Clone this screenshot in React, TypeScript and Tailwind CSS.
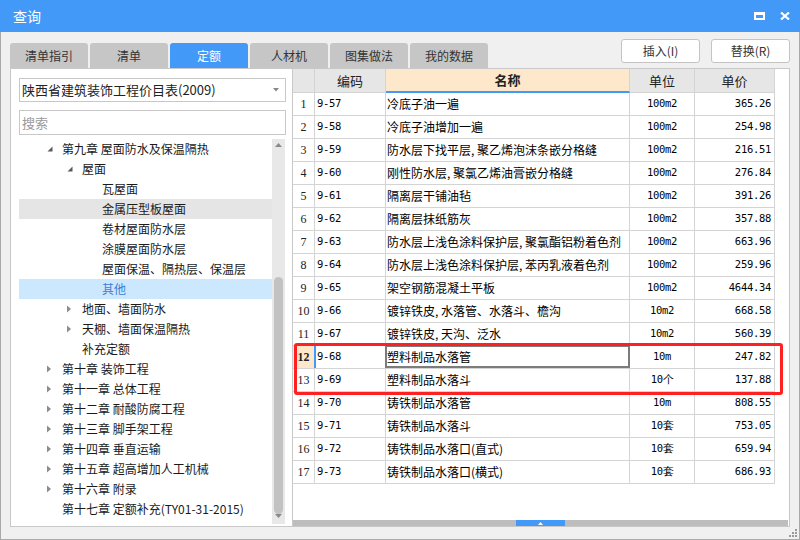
import React from "react";

type TreeItem = { l: 1 | 2 | 3; a?: "open" | "closed"; t: string; hl?: boolean; sel?: boolean };

const tree: TreeItem[] = [
  { l: 1, a: "open", t: "第九章 屋面防水及保温隔热" },
  { l: 2, a: "open", t: "屋面" },
  { l: 3, t: "瓦屋面" },
  { l: 3, t: "金属压型板屋面", hl: true },
  { l: 3, t: "卷材屋面防水层" },
  { l: 3, t: "涂膜屋面防水层" },
  { l: 3, t: "屋面保温、隔热层、保温层" },
  { l: 3, t: "其他", sel: true },
  { l: 2, a: "closed", t: "地面、墙面防水" },
  { l: 2, a: "closed", t: "天棚、墙面保温隔热" },
  { l: 2, t: "补充定额" },
  { l: 1, a: "closed", t: "第十章 装饰工程" },
  { l: 1, a: "closed", t: "第十一章 总体工程" },
  { l: 1, a: "closed", t: "第十二章 耐酸防腐工程" },
  { l: 1, a: "closed", t: "第十三章 脚手架工程" },
  { l: 1, a: "closed", t: "第十四章 垂直运输" },
  { l: 1, a: "closed", t: "第十五章 超高增加人工机械" },
  { l: 1, a: "closed", t: "第十六章 附录" },
  { l: 1, t: "第十七章 定额补充(TY01-31-2015)" },
];

const rows: [string, string, string, string][] = [
  ["9-57", "冷底子油一遍", "100m2", "365.26"],
  ["9-58", "冷底子油增加一遍", "100m2", "254.98"],
  ["9-59", "防水层下找平层, 聚乙烯泡沫条嵌分格缝", "100m2", "216.51"],
  ["9-60", "刚性防水层, 聚氯乙烯油膏嵌分格缝", "100m2", "276.84"],
  ["9-61", "隔离层干铺油毡", "100m2", "391.26"],
  ["9-62", "隔离层抹纸筋灰", "100m2", "357.88"],
  ["9-63", "防水层上浅色涂料保护层, 聚氯酯铝粉着色剂", "100m2", "663.96"],
  ["9-64", "防水层上浅色涂料保护层, 苯丙乳液着色剂", "100m2", "259.96"],
  ["9-65", "架空钢筋混凝土平板", "100m2", "4644.34"],
  ["9-66", "镀锌铁皮, 水落管、水落斗、檐沟", "10m2", "668.58"],
  ["9-67", "镀锌铁皮, 天沟、泛水", "10m2", "560.39"],
  ["9-68", "塑料制品水落管", "10m", "247.82"],
  ["9-69", "塑料制品水落斗", "10个", "137.88"],
  ["9-70", "铸铁制品水落管", "10m", "808.55"],
  ["9-71", "铸铁制品水落斗", "10套", "753.05"],
  ["9-72", "铸铁制品水落口(直式)", "10套", "659.94"],
  ["9-73", "铸铁制品水落口(横式)", "10套", "686.93"],
];

const tabs = ["清单指引", "清单", "定额", "人材机", "图集做法", "我的数据"];

function OpenArrow() {
  return (
    <svg width="6" height="6" viewBox="0 0 6 6" className="ml-[1px]">
      <path d="M5.5 0.5 L5.5 5.5 L0.5 5.5 Z" fill="#5a5a5a" />
    </svg>
  );
}
function ClosedArrow() {
  return (
    <svg width="5" height="8" viewBox="0 0 5 8" className="ml-[1px]">
      <path d="M0 0.5 L4 4 L0 7.5 Z" fill="#8c8c8c" />
    </svg>
  );
}

const padByLevel: Record<number, string> = {
  1: "w-[27px]",
  2: "w-[47px]",
  3: "w-[67px]",
};

const mono = "font-['DejaVu_Sans_Mono',monospace] text-[10.5px] tracking-[-0.3px] text-black";
const cell = "border-r border-b border-[#d4d4d4] h-[23px] flex items-center";

export default function App() {
  return (
    <div className="w-[800px] h-[540px] flex flex-col bg-[#f0f0f0] font-['Microsoft_YaHei','Noto_Sans_CJK_SC',sans-serif] overflow-hidden">
      {/* Title bar */}
      <div className="h-[32px] bg-[#4299f7] flex items-center justify-between pl-[13px] pr-[10px] shrink-0">
        <span className="text-white text-[14px] leading-none">查询</span>
        <div className="flex items-center gap-[15px]">
          <svg width="11" height="8" viewBox="0 0 11 8">
            <path d="M0 0h11v8H0z M2 3h7v3H2z" fill="#fff" fillRule="evenodd" />
          </svg>
          <svg width="10" height="8" viewBox="0 0 10 8">
            <path d="M1 0.5 L9 7.5 M9 0.5 L1 7.5" stroke="#fff" strokeWidth="2.2" />
          </svg>
        </div>
      </div>

      {/* Body */}
      <div className="flex-1 flex flex-col border-x border-b border-[#a9a9a9] pl-[9px] pr-[9px] relative">
        {/* Tabs & buttons */}
        <div className="h-[36px] flex justify-between shrink-0">
          <div className="flex gap-[2px] items-end">
            {tabs.map((t) => (
              <div
                key={t}
                className={
                  "w-[78px] h-[25px] rounded-t-[3px] flex items-center justify-center text-[12px] " +
                  (t === "定额" ? "bg-[#4299f7] text-white" : "bg-[#c6c6c6] text-[#333]")
                }
              >
                {t}
              </div>
            ))}
          </div>
          <div className="flex gap-[11px] pt-[7px]">
            <button className="w-[79px] h-[24px] bg-white border border-[#c4c4c4] rounded-[3px] text-[12px] text-[#333]">
              插入(I)
            </button>
            <button className="w-[79px] h-[24px] bg-white border border-[#c4c4c4] rounded-[3px] text-[12px] text-[#333]">
              替换(R)
            </button>
          </div>
        </div>

        {/* Panels */}
        <div className="h-[459px] flex shrink-0">
          {/* Left panel */}
          <div className="w-[282px] bg-white border-l border-t border-b border-[#c8c8c8] flex flex-col pl-[8px] pr-[6px] pt-[9px] pb-[1px]">
            <div className="h-[24px] border border-[#c8c8c8] flex items-center justify-between pl-[2px] pr-[6px]">
              <span className="text-[13px] text-[#222] whitespace-nowrap">陕西省建筑装饰工程价目表(2009)</span>
              <svg width="6" height="4" viewBox="0 0 6 4">
                <path d="M0 0 L6 0 L3 3.5 Z" fill="#888" />
              </svg>
            </div>
            <div className="h-[25px] mt-[8px] border border-[#c8c8c8] flex items-center pl-[2px]">
              <span className="text-[13px] text-[#9a9a9a]">搜索</span>
            </div>
            <div className="flex-1 flex mt-[4px]">
              <div className="w-[253px] flex flex-col">
                {tree.map((it, i) => (
                  <div
                    key={i}
                    className={
                      "h-[20px] flex items-center shrink-0 " +
                      (it.sel ? "bg-[#cce8ff]" : it.hl ? "bg-[#e5e5e5]" : "")
                    }
                  >
                    <div className={padByLevel[it.l] + " shrink-0"} />
                    <div className="w-[16px] shrink-0 flex items-center">
                      {it.a === "open" ? <OpenArrow /> : it.a === "closed" ? <ClosedArrow /> : null}
                    </div>
                    <span
                      className={
                        "text-[12px] whitespace-nowrap leading-none " +
                        (it.sel ? "text-[#3a7fd9]" : "text-[#1a1a1a]")
                      }
                    >
                      {it.t}
                    </span>
                  </div>
                ))}
              </div>
              <div className="w-[13px] bg-[#e8e8e8] flex flex-col items-center mb-[1px]">
                <div className="h-[12px] flex items-center justify-center">
                  <svg width="7" height="4" viewBox="0 0 7 4">
                    <path d="M0 4 L3.5 0 L7 4 Z" fill="#8a8a8a" />
                  </svg>
                </div>
                <div className="w-[9px] h-[237px] mt-[126px] rounded-full bg-[#c2c2c2]" />
                <div className="flex-1" />
                <div className="h-[10px] flex items-start justify-center">
                  <svg width="7" height="4" viewBox="0 0 7 4">
                    <path d="M0 0 L7 0 L3.5 4 Z" fill="#8a8a8a" />
                  </svg>
                </div>
              </div>
            </div>
          </div>

          {/* Right panel */}
          <div className="flex-1 bg-white border border-[#c8c8c8] flex flex-col">
            <div className="relative w-[482px]">
              <div className="grid grid-cols-[22px_71px_244px_65px_80px]">
                <div className="border-r border-b border-[#d4d4d4] h-[24px] bg-[#e6e6e6]" />
                <div className="border-r border-b border-[#d4d4d4] h-[24px] bg-[#e6e6e6] flex items-center justify-center text-[13px] text-[#222]">
                  编码
                </div>
                <div className="border-r border-b-2 border-r-[#d4d4d4] border-b-[#4299f7] h-[24px] bg-[#fde8cc] flex items-center justify-center text-[13px] font-bold text-[#222]">
                  名称
                </div>
                <div className="border-r border-b border-[#d4d4d4] h-[24px] bg-[#e6e6e6] flex items-center justify-center text-[13px] text-[#222]">
                  单位
                </div>
                <div className="border-r border-b border-[#d4d4d4] h-[24px] bg-[#e6e6e6] flex items-center justify-center text-[13px] text-[#222]">
                  单价
                </div>
                {rows.map((r, i) => {
                  const n = i + 1;
                  const cur = n === 12;
                  return (
                    <React.Fragment key={n}>
                      <div
                        className={
                          cell +
                          " justify-center font-['Liberation_Serif',serif] text-[12px] text-[#222] " +
                          (cur ? "bg-[#fde8cc] font-bold" : "")
                        }
                      >
                        {n}
                      </div>
                      <div className={cell + " pl-[2px] relative " + mono}>
                        {cur && <div className="absolute -left-[1px] top-0 bottom-0 w-[2px] bg-[#4299f7]" />}
                        {r[0]}
                      </div>
                      <div className={cell + " pl-[1px] text-[12px] text-black whitespace-nowrap relative"}>
                        {cur && (
                          <div className="absolute -left-[1px] -top-[1px] -right-[1px] bottom-0 border-2 border-[#7c7c7c]" />
                        )}
                        {r[1]}
                      </div>
                      <div className={cell + " justify-center " + mono}>{r[2]}</div>
                      <div className={cell + " justify-end pr-[3px] " + mono}>{r[3]}</div>
                    </React.Fragment>
                  );
                })}
              </div>
              {/* red highlight */}
              <div className="absolute left-[1px] top-[274px] w-[489px] h-[52px] border-[3px] border-[#ff2121] rounded-[3px] pointer-events-none" />
            </div>
            <div className="flex-1" />
            <div className="h-[6px] bg-[#bdbdbd] flex mr-[1px]">
              <div className="ml-[223px] w-[49px] h-full bg-[#4299f7] flex items-center justify-center">
                <svg width="5" height="3" viewBox="0 0 5 3">
                  <path d="M0 3 L2.5 0 L5 3 Z" fill="#fff" />
                </svg>
              </div>
            </div>
          </div>
        </div>

        {/* resize grip */}
        <svg className="absolute right-[2px] bottom-[2px]" width="8" height="8" viewBox="0 0 8 8">
          <rect x="6" y="0" width="2" height="2" fill="#9a9a9a" />
          <rect x="3" y="3" width="2" height="2" fill="#9a9a9a" />
          <rect x="6" y="3" width="2" height="2" fill="#9a9a9a" />
          <rect x="0" y="6" width="2" height="2" fill="#9a9a9a" />
          <rect x="3" y="6" width="2" height="2" fill="#9a9a9a" />
          <rect x="6" y="6" width="2" height="2" fill="#9a9a9a" />
        </svg>
      </div>
    </div>
  );
}
